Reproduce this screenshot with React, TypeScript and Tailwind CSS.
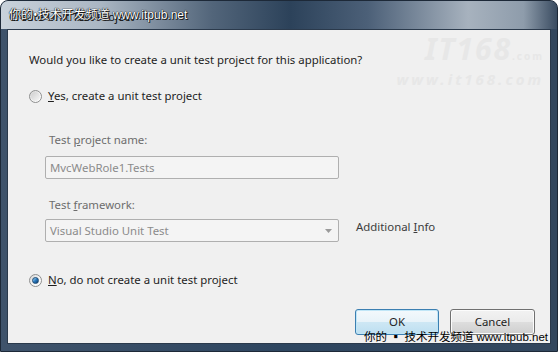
import React from "react";

const font = { fontFamily: '"Segoe UI", "Noto Sans", "Noto Sans CJK SC", sans-serif' };

function Radio({ checked }: { checked?: boolean }) {
  return (
    <span className="flex h-[13px] w-[13px] items-center justify-center rounded-full border border-[#8e8f8f] bg-gradient-to-br from-[#d4d4d4] via-[#f4f4f4] to-[#ffffff]">
      {checked ? (
        <span className="h-[7px] w-[7px] rounded-full border border-[#1c4a73] bg-gradient-to-br from-[#a9dcf6] via-[#2b7bc0] to-[#0d3b6a]" />
      ) : (
        <span className="h-[9px] w-[9px] rounded-full bg-gradient-to-br from-[#cfcfcf] to-[#f7f7f7]" />
      )}
    </span>
  );
}

export default function App() {
  return (
    <div
      className="relative flex h-[352px] w-[558px] flex-col overflow-hidden rounded-t-[8px] border border-[#1d2938] bg-gradient-to-r from-[#3f536b] via-[#2e4660] to-[#33475e] text-[11.4px]"
      style={font}
    >
      <div className="relative h-[28px] bg-[linear-gradient(90deg,#c9d2db_0%,#aab6c3_18%,#52657a_38%,#2c425a_52%,#4c6078_66%,#a7b2be_84%,#8e9cab_94%,#3a4c61_100%)]">
        <span className="absolute left-[8px] top-[7px] text-[11.4px] text-[#111]">Create Unit Test Project</span>
        <span className="absolute left-[8px] top-[6px] text-[12px] leading-[16px] text-white [text-shadow:0_0_1px_#000,0_0_1px_#000,1px_1px_0_#222]">
          你的•技术开发频道 <span style={{ fontFamily: '"Liberation Sans", sans-serif' }}>www.itpub.net</span>
        </span>
      </div>

      <div className="relative mx-[6px] mb-[7px] flex flex-1 flex-col border border-[#2b3a4c] bg-[#f0f0f0] pl-[21px] pr-[14px] text-[#1e1e1e]">
        <div className="pointer-events-none absolute right-[6px] top-[4px] flex flex-col items-end italic text-[#e7e7e7]">
          <span className="text-[30px] font-bold leading-[30px] tracking-[2px]">IT168<span className="text-[10px] not-italic">.com</span></span>
          <span className="text-[15px] font-bold leading-[16px] tracking-[3px]">www.it168.com</span>
        </div>

        <div className="mt-[22px] h-[16px] leading-[16px]">Would you like to create a unit test project for this application?</div>

        <label className="mt-[20px] flex h-[16px] items-center gap-[6px] leading-[16px]">
          <Radio />
          <span>
            <u>Y</u>es, create a unit test project
          </span>
        </label>

        <div className="ml-[20px] mt-[28px] h-[16px] leading-[16px] text-[#6d6d6d]">
          Test <u>p</u>roject name:
        </div>
        <div className="ml-[16px] mt-[8px] flex h-[23px] w-[294px] items-center rounded-[2px] border border-[#afafaf] bg-[#f4f4f4] pl-[4px] text-[#8b8b8b]">
          MvcWebRole1.Tests
        </div>

        <div className="ml-[20px] mt-[18px] h-[16px] leading-[16px] text-[#6d6d6d]">
          Test <u>f</u>ramework:
        </div>
        <div className="mt-[6px] flex h-[23px] items-center">
          <div className="ml-[16px] flex h-[23px] w-[294px] items-center justify-between rounded-[2px] border border-[#afafaf] bg-[#f4f4f4] pl-[4px] pr-[6px] text-[#8b8b8b]">
            <span>Visual Studio Unit Test</span>
            <svg width="7" height="4" viewBox="0 0 7 4">
              <path d="M0 0h7L3.5 4z" fill="#9a9a9a" />
            </svg>
          </div>
          <span className="-mt-[7px] ml-[17px] text-[#3c3c3c]">
            Additional <u>I</u>nfo
          </span>
        </div>

        <label className="mt-[30px] flex h-[16px] items-center gap-[6px] leading-[16px]">
          <Radio checked />
          <span>
            <u>N</u>o, do not create a unit test project
          </span>
        </label>

        <div className="mt-[21px] flex justify-end gap-[11px] pr-[1px]">
          <button className="h-[26px] w-[84px] rounded-[3px] border border-[#3c7fb1] bg-[linear-gradient(180deg,#f3f9fc_0%,#e8f3f9_48%,#cde7f4_52%,#bddff1_100%)] text-[#1e1e1e] shadow-[inset_0_0_0_1px_#c0e6f7]">
            OK
          </button>
          <button className="h-[26px] w-[85px] rounded-[3px] border border-[#707070] bg-[linear-gradient(180deg,#f2f2f2_0%,#ebebeb_48%,#dddddd_52%,#cfcfcf_100%)] text-[#1e1e1e] shadow-[inset_0_0_0_1px_#fcfcfc]">
            Cancel
          </button>
        </div>

        <span className="absolute bottom-0 right-[2px] text-[11.5px] leading-[12px] text-black">
          你的 ▪ 技术开发频道 <span style={{ fontFamily: '"Liberation Sans", sans-serif' }}>www.itpub.net</span>
        </span>
      </div>
    </div>
  );
}
